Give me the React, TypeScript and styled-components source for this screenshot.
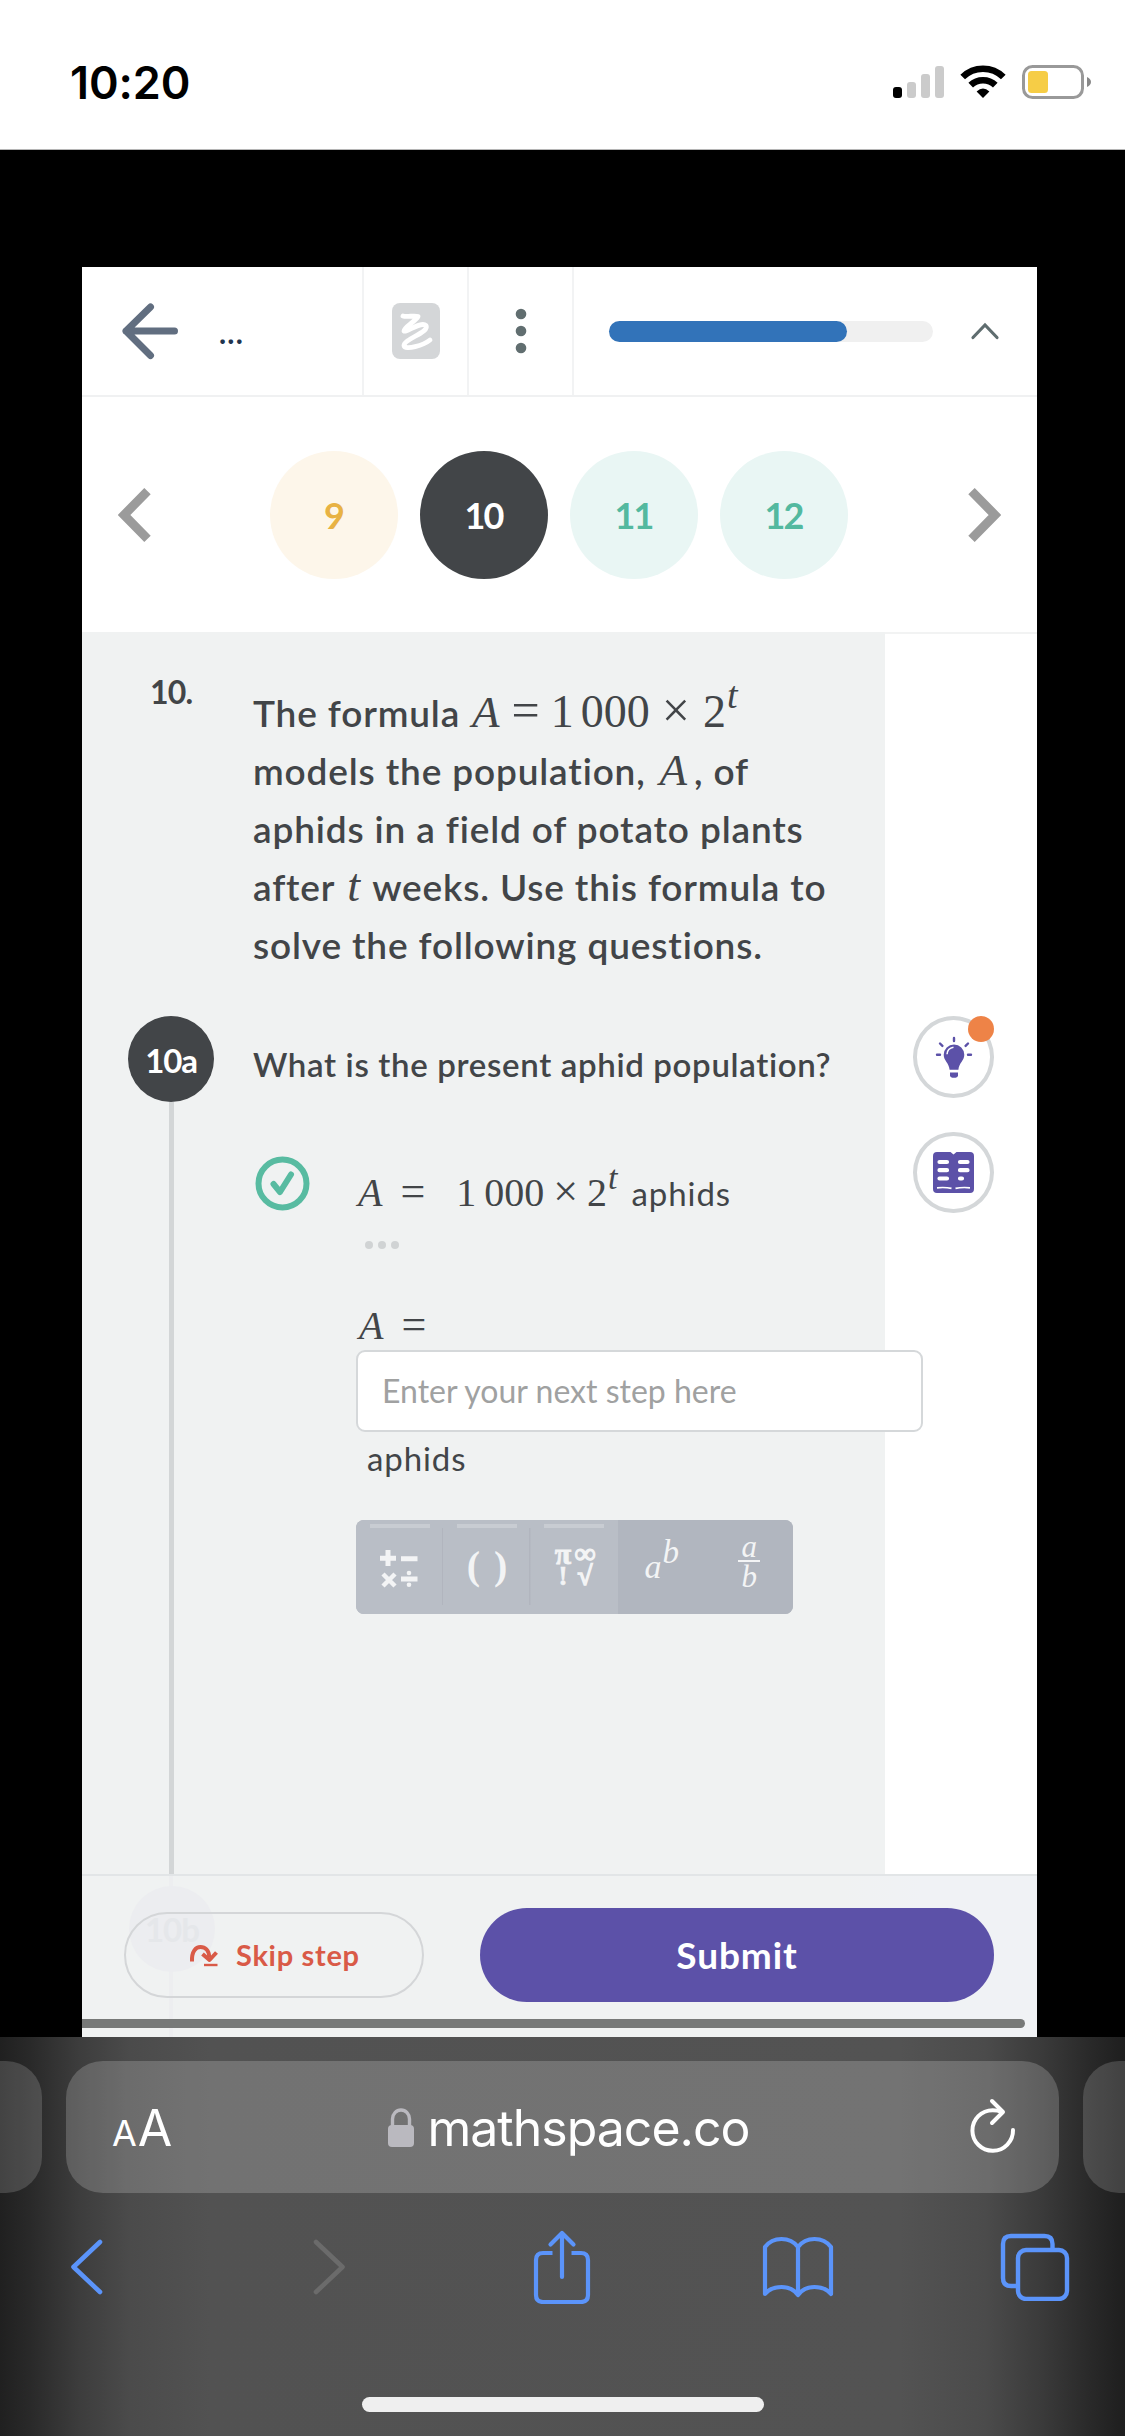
import React from "react";
import styled, { createGlobalStyle } from "styled-components";

const sans = `Lato, "Liberation Sans", sans-serif`;
const system = `Inter, "Liberation Sans", sans-serif`;
const serif = `"Liberation Serif", serif`;
const ink = "#424548";
const purple = "#5c51a8";
const blue = "#5b94fa";

const GlobalStyle = createGlobalStyle`
  * { box-sizing: border-box; }
  body { margin: 0; background: #000; }
  button { padding: 0; border: 0; background: none; font: inherit; color: inherit; }
`;

const Screen = styled.div`
  width: 1125px;
  height: 2436px;
  display: flex;
  flex-direction: column;
  overflow: hidden;
  background: #000;
  font-family: ${sans};
  font-variant-ligatures: none;
  color: ${ink};
`;

/* ---------- status bar ---------- */
const StatusBar = styled.header`
  height: 150px;
  flex: none;
  display: flex;
  justify-content: space-between;
  padding: 54px 31px 0 70px;
  background: #fff;
  border-bottom: 1px solid #b5b5b5;
`;
const Clock = styled.div`
  font: 600 45px/57px ${system};
  letter-spacing: -0.1px;
  color: #000;
`;
const StatusIcons = styled.div`
  display: flex;
  padding-top: 11px;
`;

/* ---------- app card ---------- */
const Card = styled.main`
  width: 955px;
  height: 1770px;
  flex: none;
  margin: 117px 0 0 82px;
  display: flex;
  flex-direction: column;
  background: #fff;
`;
const Toolbar = styled.div`
  height: 130px;
  flex: none;
  display: flex;
  border-bottom: 2px solid #f0f1f2;
`;
const ToolCell = styled.div<{ $w: number }>`
  width: ${(p) => p.$w}px;
  display: flex;
  align-items: center;
  justify-content: center;
  border-right: 2px solid #f2f3f4;
`;
const BackCell = styled(ToolCell)`
  justify-content: flex-start;
  padding-left: 38px;
  gap: 39px;
`;
const Ellipsis = styled.span`
  padding-top: 2px;
  font: 700 30px/40px ${sans};
  letter-spacing: 1.2px;
  color: #22344e;
`;
const ProgressCell = styled.div`
  flex: 1;
  display: flex;
  align-items: center;
  padding-left: 35px;
  gap: 36px;
`;
const Track = styled.div`
  width: 324px;
  height: 21px;
  border-radius: 11px;
  background: #f0f0f0;
`;
const Fill = styled.div`
  width: 238px;
  height: 21px;
  border-radius: 11px;
  background: #3273b9;
`;

const Pager = styled.nav`
  height: 237px;
  flex: none;
  display: flex;
  align-items: center;
  justify-content: space-between;
  padding: 0 36px;
  border-bottom: 2px solid #f2f3f3;
`;
const Bubbles = styled.div`
  display: flex;
  gap: 22px;
  padding-right: 2px;
`;
const Bubble = styled.button<{ $bg: string; $fg: string }>`
  width: 128px;
  height: 128px;
  border-radius: 50%;
  background: ${(p) => p.$bg};
  color: ${(p) => p.$fg};
  font: 700 36px/128px ${sans};
  letter-spacing: -2px;
`;

/* ---------- workbook body ---------- */
const Body = styled.div`
  height: 1240px;
  flex: none;
  display: flex;
`;
const Sheet = styled.section`
  width: 803px;
  flex: none;
  display: flex;
  flex-direction: column;
  margin-top: -2px;
  padding-top: 2px;
  background: #f0f2f2;
`;
const Rail = styled.aside`
  flex: 1;
  display: flex;
  flex-direction: column;
  align-items: flex-start;
  gap: 34px;
  padding: 382px 0 0 28px;
`;
const Stem = styled.div`
  height: 382px;
  flex: none;
  display: flex;
`;
const StemNumber = styled.div`
  width: 171px;
  padding: 38px 0 0 68px;
  font-size: 32px;
  line-height: 40px;
  font-weight: 700;
  letter-spacing: -0.8px;
`;
const StemText = styled.div`
  padding-top: 50px;
`;
const Line = styled.div`
  height: 58px;
  font-size: 37px;
  line-height: 58px;
  font-weight: 600;
  letter-spacing: 0.85px;
  white-space: nowrap;
`;
const M = styled.span<{ $l?: number; $r?: number; $size?: number; $i?: boolean; $up?: number }>`
  font-family: ${serif};
  font-weight: 400;
  font-style: ${(p) => (p.$i ? "italic" : "normal")};
  font-size: ${(p) => p.$size ?? 46}px;
  line-height: 0;
  letter-spacing: 0;
  margin-left: ${(p) => p.$l ?? 0}px;
  margin-right: ${(p) => p.$r ?? 0}px;
  vertical-align: ${(p) => p.$up ?? 0}px;
`;

const Part = styled.div`
  flex: 1;
  display: flex;
`;
const Timeline = styled.div`
  width: 171px;
  flex: none;
  display: flex;
  flex-direction: column;
  align-items: center;
  padding-left: 7px;
`;
const PartBadge = styled.div`
  width: 86px;
  height: 86px;
  border-radius: 50%;
  background: ${ink};
  color: #fff;
  font: 700 33px/88px ${sans};
  letter-spacing: -1.2px;
  text-align: center;
`;
const Thread = styled.div`
  width: 5px;
  flex: 1;
  background: #d3d6d7;
`;
const Work = styled.div`
  width: 670px;
  flex: none;
`;
const Question = styled.h2`
  margin: 0;
  height: 86px;
  padding-top: 5px;
  font-size: 33px;
  line-height: 86px;
  font-weight: 600;
  letter-spacing: 0.65px;
  white-space: nowrap;
`;
const Step = styled.div`
  display: flex;
  height: 194px;
  padding-top: 54px;
`;
const StepIcon = styled.div`
  width: 105px;
  padding-left: 2px;
`;
const StepBody = styled.div`
  padding-top: 17px;
`;
const Expr = styled.div`
  height: 40px;
  font-size: 33px;
  line-height: 40px;
  letter-spacing: 0.9px;
  white-space: nowrap;
`;
const Dots = styled.div`
  display: flex;
  gap: 5px;
  padding: 28px 0 0 7px;
`;
const Dot = styled.i`
  width: 8px;
  height: 8px;
  border-radius: 50%;
  background: #d0d3d4;
`;
const Answer = styled.div`
  padding-left: 103px;
`;
const EntryRow = styled.div`
  height: 54px;
  padding: 10px 0 0 3px;
`;
const StepInput = styled.input`
  display: block;
  width: 567px;
  height: 82px;
  padding: 0 24px 2px;
  border: 2px solid #d5d8da;
  border-radius: 9px;
  background: #fff;
  font: 400 32px/40px ${sans};
  position: relative;
  &::placeholder { color: #a0a1a1; opacity: 1; }
`;
const Unit = styled.div`
  padding: 6px 0 0 11px;
  font-size: 33px;
  line-height: 40px;
  letter-spacing: 0.9px;
`;
const Keypad = styled.div`
  width: 437px;
  height: 94px;
  margin-top: 42px;
  display: flex;
  border-radius: 8px;
  overflow: hidden;
  background: #b1b6bf;
  color: #f3f4f5;
`;
const Key = styled.button<{ $tab?: boolean; $rule?: boolean }>`
  width: 87.4px;
  height: 94px;
  display: flex;
  flex-direction: column;
  align-items: center;
  background: ${(p) =>
    !p.$tab
      ? "#b1b6bf"
      : p.$rule
        ? "linear-gradient(#b1b5be, #b1b5be) right 8px / 1.5px 77px no-repeat, #b9bec6"
        : "#b9bec6"};
  &::before {
    content: "";
    width: 60px;
    height: 4px;
    margin: 4px 0 0;
    background: ${(p) => (p.$tab ? "#c8ccd2" : "transparent")};
  }
`;
const Parens = styled.span`
  font: 700 40px/76px ${serif};
  letter-spacing: 14px;
  padding-left: 14px;
`;
const Symbols = styled.span`
  display: grid;
  grid-template-columns: 18px 20px;
  grid-template-rows: 23px 23px;
  justify-items: center;
  align-items: center;
  column-gap: 3px;
  padding-top: 14px;
`;
const Glyph = styled.span<{ $size: number; $bold?: number }>`
  font: 700 ${(p) => p.$size}px/23px ${serif};
  -webkit-text-stroke: ${(p) => p.$bold ?? 0}px #f3f4f5;
`;
const Power = styled.span`
  font: italic 400 34px/40px ${serif};
  padding-top: 19px;
  sup {
    font-size: 33px;
    line-height: 0;
    vertical-align: 15px;
    margin-left: 1px;
  }
`;
const Fraction = styled.span`
  display: flex;
  flex-direction: column;
  align-items: center;
  padding-top: 5px;
  font: italic 400 31px/27px ${serif};
  span:last-child {
    width: 22px;
    border-top: 2.5px solid #f3f4f5;
    padding-top: 1px;
  }
`;
const ToolButton = styled.button`
  position: relative;
  width: 81px;
  height: 81.5px;
  border: 4px solid #d4d7d9;
  border-radius: 50%;
  display: flex;
  align-items: center;
  justify-content: center;
`;
const Alert = styled.i`
  position: absolute;
  top: -4px;
  right: -4px;
  width: 26px;
  height: 26px;
  border-radius: 50%;
  background: #ee8347;
`;

/* ---------- action footer ---------- */
const Actions = styled.footer`
  position: relative;
  height: 163px;
  flex: none;
  padding: 32px 43px 0 42px;
  display: flex;
  justify-content: space-between;
  align-items: flex-start;
  border-top: 2px solid #e2e5e7;
  background: linear-gradient(90deg, #f0f2f2 760px, #f0f2f5 840px);
`;
const Ghost = styled.div`
  position: absolute;
  left: 87px;
  top: 0;
  width: 4px;
  height: 161px;
  background: #edeef0;
`;
const GhostBadge = styled.div`
  position: absolute;
  left: 47px;
  top: 10px;
  width: 86px;
  height: 86px;
  border-radius: 50%;
  background: #ecedf0;
  color: #e5e7ea;
  font: 700 33px/86px ${sans};
  letter-spacing: -1px;
  text-align: center;
`;
const SkipButton = styled.button`
  position: relative;
  width: 300px;
  height: 86px;
  margin-top: 4px;
  padding-left: 63px;
  border: 2px solid #d4d6d8;
  border-radius: 43px;
  display: flex;
  align-items: center;
  gap: 17px;
  font: 700 29px/40px ${sans};
  letter-spacing: 0.7px;
  color: #d95a47;
`;
const SubmitButton = styled.button`
  width: 514px;
  height: 94px;
  border-radius: 47px;
  background: ${purple};
  color: #fff;
  font: 700 37px/92px ${sans};
  letter-spacing: 0.9px;
`;
const ScrollThumb = styled.i`
  position: absolute;
  left: 0;
  bottom: 9px;
  width: 943px;
  height: 9px;
  border-radius: 0 5px 5px 0;
  background: #777978;
`;

/* ---------- browser chrome ---------- */
const Chrome = styled.footer`
  flex: 1;
  display: flex;
  flex-direction: column;
  align-items: center;
  background: linear-gradient(
    90deg,
    #202020 0,
    #292929 30px,
    #3d3d3d 80px,
    #4b4b4b 130px,
    #525252 210px,
    #535353 900px,
    #4b4b4b 985px,
    #3b3b3b 1040px,
    #292929 1090px,
    #1e1e1e 1125px
  );
`;
const Tabs = styled.div`
  width: 1209px;
  height: 132px;
  margin-top: 24px;
  flex: none;
  display: flex;
  justify-content: space-between;
`;
const SideTab = styled.div`
  width: 84px;
  border-radius: 36px;
  background: rgba(255, 255, 255, 0.16);
`;
const AddressBar = styled.div`
  width: 993px;
  border-radius: 37px;
  background: rgba(255, 255, 255, 0.19);
  display: flex;
  align-items: center;
  justify-content: space-between;
  padding: 2px 43px 0 46px;
  color: #fff;
`;
const TextSize = styled.span`
  padding-top: 4px;
  font: 400 50px/60px ${system};
  letter-spacing: -1.2px;
  small {
    font-size: 36px;
    margin-right: 2px;
  }
`;
const Domain = styled.div`
  display: flex;
  align-items: center;
  gap: 12px;
  margin-right: 4px;
  font: 400 50px/60px ${system};
  letter-spacing: -1px;
`;
const ChromeNav = styled.nav`
  width: 100%;
  height: 148px;
  display: grid;
  grid-template-columns: 244px 220px 228.5px 239.5px 70px;
  align-items: center;
  padding-left: 68px;
`;
const HomeBar = styled.div`
  width: 402px;
  height: 15px;
  margin-top: 56px;
  border-radius: 8px;
  background: #efefef;
`;

const pages = [
  { n: 9, bg: "#fdf6ea", fg: "#e8b244" },
  { n: 10, bg: ink, fg: "#fff" },
  { n: 11, bg: "#e9f6f4", fg: "#53b99f" },
  { n: 12, bg: "#e9f6f4", fg: "#53b99f" },
];

const SystemIcons = () => (
  <svg width="202" height="36" viewBox="892 65 202 36">
    <rect x="893" y="87" width="9" height="11" rx="3" />
    <g fill="#cbcbcb">
      <rect x="907" y="82" width="9" height="16" rx="3" />
      <rect x="921" y="74" width="9" height="24" rx="3" />
      <rect x="935" y="66" width="9" height="32" rx="3" />
    </g>
    <path d="M983 98 L976.6 91.5 Q983 85.5 989.4 91.5Z" strokeLinejoin="round" />
    <g fill="none" stroke="#000" strokeWidth="6.6">
      <path d="M970.7 85.2 A17.6 17.6 0 0 1 995.3 85.2" />
      <path d="M962.7 77 A29 29 0 0 1 1003.3 77" />
    </g>
    <rect x="1023.5" y="66.5" width="59" height="31" rx="9" fill="none" stroke="#999" strokeWidth="3" />
    <rect x="1028" y="71" width="20" height="22" rx="3.5" fill="#f6cd46" />
    <path d="M1087 77 Q1091 79 1091 82 Q1091 85 1087 87Z" fill="#888" />
  </svg>
);

const Keys = () => (
  <Keypad>
    <Key $tab $rule>
      <svg width="87" height="86" viewBox="0 8 87 86" stroke="#f3f4f5" strokeWidth="5" fill="#f3f4f5">
        <path d="M24 38.3h16M32 30v16M45 38.7h16.500M45 59h16.500" />
        <path d="M27 54l12 12M39 54l-12 12" strokeWidth="4.500" />
        <circle cx="53" cy="53" r="2.300" stroke="none" />
        <circle cx="53" cy="64.700" r="2.300" stroke="none" />
      </svg>
    </Key>
    <Key $tab $rule>
      <Parens>()</Parens>
    </Key>
    <Key $tab>
      <Symbols>
        <Glyph $size={30} $bold={0.8}>π</Glyph>
        <Glyph $size={29} $bold={1.4}>∞</Glyph>
        <Glyph $size={27} $bold={0.6}>!</Glyph>
        <Glyph $size={27} $bold={1.6}>√</Glyph>
      </Symbols>
    </Key>
    <Key>
      <Power>
        a<sup>b</sup>
      </Power>
    </Key>
    <Key>
      <Fraction>
        <span>a</span>
        <span>b</span>
      </Fraction>
    </Key>
  </Keypad>
);

export default function App() {
  return (
    <Screen>
      <GlobalStyle />
      <StatusBar>
        <Clock>10:20</Clock>
        <StatusIcons>
          <SystemIcons />
        </StatusIcons>
      </StatusBar>

      <Card>
        <Toolbar>
          <BackCell $w={282}>
            <svg width="60" height="60" viewBox="0 0 60 60" fill="none" stroke="#616e80" strokeWidth="7" strokeLinecap="round" strokeLinejoin="round">
              <path d="M54.500 30H6M30.500 6L6 30l24.500 24.500" />
            </svg>
            <Ellipsis>...</Ellipsis>
          </BackCell>
          <ToolCell $w={105}>
            <svg width="48" height="56" viewBox="0 0 48 56">
              <rect width="48" height="56" rx="8" fill="#d4d6d8" />
              <path d="M11 13C15 14.500 22 12 26 13.500C23 19 12 24 12 28C14 30 29 18 34 22.500C38 29 12 36 12 42.500C13 48 32 42 38 37" fill="none" stroke="#fff" strokeWidth="4.800" strokeLinecap="round" strokeLinejoin="round" />
            </svg>
          </ToolCell>
          <ToolCell $w={105}>
            <svg width="12" height="48" viewBox="0 0 12 48" fill="#616e70">
              <circle cx="6" cy="7" r="5.300" />
              <circle cx="6" cy="24" r="5.300" />
              <circle cx="6" cy="41" r="5.300" />
            </svg>
          </ToolCell>
          <ProgressCell>
            <Track>
              <Fill />
            </Track>
            <svg width="32" height="20" viewBox="0 0 32 20" fill="none" stroke="#5f6d6f" strokeWidth="3.200" strokeLinecap="round">
              <path d="M4 16.500L16 4l12 12.500" />
            </svg>
          </ProgressCell>
        </Toolbar>

        <Pager>
          <svg width="33" height="54" viewBox="0 0 33 54" fill="none" stroke="#9b9b9b" strokeWidth="9">
            <path d="M29.500 3.200L6 27l23.500 23.800" />
          </svg>
          <Bubbles>
            {pages.map((p) => (
              <Bubble key={p.n} $bg={p.bg} $fg={p.fg}>
                {p.n}
              </Bubble>
            ))}
          </Bubbles>
          <svg width="33" height="54" viewBox="0 0 33 54" fill="none" stroke="#9b9b9b" strokeWidth="9">
            <path d="M3.500 3.200L27 27L3.500 50.800" />
          </svg>
        </Pager>

        <Body>
          <Sheet>
            <Stem>
              <StemNumber>10.</StemNumber>
              <StemText>
                <Line>
                  The formula
                  <M $i $l={12} $size={45}>A</M>
                  <M $l={12} $size={50}>=</M>
                  <M $l={11}>1</M>
                  <M $l={7}>000</M>
                  <M $l={12} $size={50}>×</M>
                  <M $l={13}>2</M>
                  <M $i $size={38} $up={19} $l={1}>t</M>
                </Line>
                <Line>
                  models the population,
                  <M $i $l={14} $r={7} $size={45}>A</M>, of
                </Line>
                <Line>aphids in a field of potato plants</Line>
                <Line>
                  after
                  <M $i $l={12} $r={12}>t</M>
                  weeks. Use this formula to
                </Line>
                <Line>solve the following questions.</Line>
              </StemText>
            </Stem>

            <Part>
              <Timeline>
                <PartBadge>10a</PartBadge>
                <Thread />
              </Timeline>
              <Work>
                <Question>What is the present aphid population?</Question>
                <Step>
                  <StepIcon>
                    <svg width="55" height="55" viewBox="0 0 55 55" fill="none" stroke="#58bba1" strokeWidth="6" strokeLinecap="round" strokeLinejoin="round">
                      <circle cx="27.500" cy="27.500" r="24" />
                      <path d="M18.500 28l6.500 8L36 18.500" strokeWidth="6" />
                    </svg>
                  </StepIcon>
                  <StepBody>
                    <Expr>
                      <M $i $size={40}>A</M>
                      <M $size={44} $l={18}>=</M>
                      <M $size={40} $l={31}>1</M>
                      <M $size={40} $l={8}>000</M>
                      <M $size={44} $l={9}>×</M>
                      <M $size={40} $l={9}>2</M>
                      <M $i $size={34} $up={17} $l={1} $r={14}>t</M>
                      aphids
                    </Expr>
                    <Dots>
                      <Dot />
                      <Dot />
                      <Dot />
                    </Dots>
                  </StepBody>
                </Step>
                <Answer>
                  <EntryRow>
                    <Expr>
                      <M $i $size={40}>A</M>
                      <M $size={44} $l={18}>=</M>
                    </Expr>
                  </EntryRow>
                  <StepInput placeholder="Enter your next step here" />
                  <Unit>aphids</Unit>
                  <Keys />
                </Answer>
              </Work>
            </Part>
          </Sheet>
          <Rail>
            <ToolButton>
              <svg width="38" height="42" viewBox="0 0 38 42" fill={purple}>
                <path d="M19 8.500a10.300 10.300 0 0 0-10.300 10.300c0 6 5.400 8.200 5.900 15h8.800c.5-6.800 5.900-9 5.900-15A10.300 10.300 0 0 0 19 8.500Z" />
                <path d="M15 36.500h8v2.800q0 2.400-2.400 2.400h-3.200q-2.400 0-2.400-2.400Z" />
                <path d="M12 18.300q.3-6 6.500-7" fill="none" stroke="#fff" strokeWidth="1.500" />
                <g stroke={purple} strokeWidth="2.400" strokeLinecap="round">
                  <path d="M19 2v3M5 7.500l2.400 2.400M33 7.500l-2.400 2.400M2 18.800h3M33 18.800h3" />
                </g>
              </svg>
              <Alert />
            </ToolButton>
            <ToolButton>
              <svg width="41" height="41" viewBox="0 0 41 41">
                <path d="M4 0H17.500L20.500 2.500L23.500 0H37Q41 0 41 4V37Q41 41 37 41H4Q0 41 0 37V4Q0 0 4 0Z" fill={purple} />
                <g stroke="#fff" strokeWidth="4.200" strokeLinecap="round">
                  <path d="M6.500 10h7.500M6.500 18.200h7.500M6.500 26.500h7.500M27 10h7.500M27 18.200h7.500M27 26.500h2" />
                </g>
                <path d="M4 35.800q8-.8 14.500.6M22.500 36.400q6.500-1.400 14.500-.6" fill="none" stroke="#fff" strokeWidth="1.700" />
              </svg>
            </ToolButton>
          </Rail>
        </Body>

        <Actions>
          <Ghost />
          <GhostBadge>10b</GhostBadge>
          <SkipButton>
            <svg width="30" height="24" viewBox="0 0 30 24" fill="none" stroke="#d95a47" strokeLinejoin="round">
              <path d="M3 18.500C2.500 8 7 4 11.500 4C16 4 20 7 20.200 14" strokeWidth="4" />
              <path d="M13.500 11l7 6 7-7.500" strokeWidth="4" />
              <path d="M15 22h13.500" strokeWidth="2.400" />
            </svg>
            Skip step
          </SkipButton>
          <SubmitButton>Submit</SubmitButton>
          <ScrollThumb />
        </Actions>
      </Card>

      <Chrome>
        <Tabs>
          <SideTab />
          <AddressBar>
            <TextSize>
              <small>A</small>A
            </TextSize>
            <Domain>
              <svg width="28" height="40" viewBox="0 0 28 40">
                <rect x="1" y="17" width="26" height="22" rx="4" fill="#bab9bf" />
                <path d="M5.500 18V11a8.500 9 0 0 1 17 0v7" fill="none" stroke="#bab9bf" strokeWidth="3.400" />
              </svg>
              mathspace.co
            </Domain>
            <svg width="46" height="60" viewBox="0 0 46 60" fill="none" stroke="#fff" strokeWidth="4" strokeLinecap="round" strokeLinejoin="round">
              <path d="M43 32A20.300 20.300 0 1 1 22.700 12.200q5 0 8.800 1.600" />
              <path d="M22 3l11 11-11 11" />
            </svg>
          </AddressBar>
          <SideTab />
        </Tabs>
        <ChromeNav>
          <svg width="36" height="58" viewBox="0 0 36 58" fill="none" stroke={blue} strokeWidth="4.600" strokeLinecap="round" strokeLinejoin="round">
            <path d="M32 4L5.500 29 32 54" />
          </svg>
          <svg width="36" height="58" viewBox="0 0 36 58" fill="none" stroke="#6b6b6b" strokeWidth="4.600" strokeLinecap="round" strokeLinejoin="round">
            <path d="M4 4l26.500 25L4 54" />
          </svg>
          <svg width="60" height="74" viewBox="0 0 60 74" fill="none" stroke={blue} strokeWidth="4.200" strokeLinecap="round" strokeLinejoin="round">
            <path d="M20.500 23H11q-7 0-7 7v35q0 7 7 7h38q7 0 7-7V30q0-7-7-7h-9.500" strokeLinecap="butt" />
            <path d="M30 47V3M18.500 14.500L30 3l11.500 11.500" />
          </svg>
          <svg width="74" height="62" viewBox="0 0 74 62" fill="none" stroke={blue} strokeWidth="4.200" strokeLinejoin="round">
            <path d="M37 11Q31 3 20.500 3T4 11v47Q10 51 20.500 51T37 59Q43 51 53.500 51T70 58V11Q64 3 53.500 3T37 11V59" />
          </svg>
          <svg width="70" height="68" viewBox="0 0 70 68" fill="none" stroke={blue} strokeWidth="4.400">
            <path d="M52.500 17V11q0-8-8-8H11q-8 0-8 8v34q0 8 8 8h7" />
            <rect x="18" y="17" width="49" height="49" rx="8" />
          </svg>
        </ChromeNav>
        <HomeBar />
      </Chrome>
    </Screen>
  );
}
